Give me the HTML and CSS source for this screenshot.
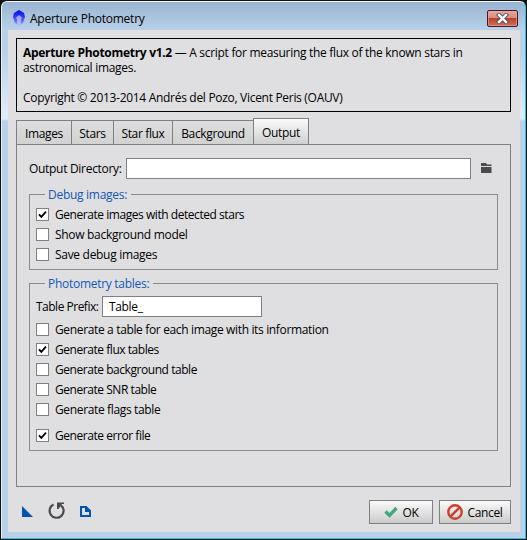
FILE: index.html
```html
<!DOCTYPE html>
<html lang="en">
<head>
<meta charset="utf-8">
<title>Aperture Photometry</title>
<link rel="stylesheet" href="styles.css">
</head>
<body>
<div class="window">
  <header class="titlebar">
    <svg class="logo" width="14" height="16" viewBox="0 0 14 16"><defs><linearGradient id="gem" x1="0" y1="0" x2="0" y2="1"><stop offset="0" stop-color="#0505e8"/><stop offset=".45" stop-color="#3038fa"/><stop offset="1" stop-color="#8f9df8"/></linearGradient></defs><path d="M7 0l5 3 1 4-2 6-4 2-4-2-2-6 1-4z" fill="url(#gem)"/><path d="M7 5L3.500 8l1.500 1v4.500l2 1.500 2-1.500V9l1.500-1z" fill="#c9d2fa" opacity=".7"/></svg>
    <span class="title">Aperture Photometry</span>
    <button class="close" aria-label="Close"><svg width="13" height="11" viewBox="0 0 13 11"><path d="M3 2l7 7M10 2L3 9" fill="none" stroke="#4d5367" stroke-width="4.200" stroke-linecap="square"/><path d="M3 2l7 7M10 2L3 9" fill="none" stroke="#fff" stroke-width="2.400" stroke-linecap="square"/></svg></button>
  </header>
  <main class="client">
    <section class="about">
      <p><b>Aperture Photometry v1.2</b> — A script for measuring the flux of the known stars in</p>
      <p>astronomical images.</p>
      <p class="blank"></p>
      <p>Copyright © 2013-2014 Andrés del Pozo, Vicent Peris (OAUV)</p>
    </section>
    <nav class="tabs">
      <span class="tab tab-images">Images</span><span class="tab tab-stars">Stars</span><span class="tab tab-flux">Star flux</span><span class="tab tab-back">Background</span><span class="tab tab-output active">Output</span>
    </nav>
    <section class="panel">
      <div class="dir-row">
        <label>Output Directory:</label>
        <div class="field dir"></div>
        <svg class="folder" width="11" height="11" viewBox="0 0 11 11"><path d="M0 0h5l1 1.500h4.500V3H0zM0 4h10.500v6H0z" fill="#4a4a4a"/></svg>
      </div>
      <fieldset class="group debug">
        <legend>Debug images:</legend>
        <label class="check snug"><i class="box"><svg viewBox="0 0 11 11"><path d="M2 5.300l2.300 2.500L9 2.700" /></svg></i><span>Generate images with detected stars</span></label>
        <label class="check loose"><i class="box"></i><span>Show background model</span></label>
        <label class="check loose"><i class="box"></i><span>Save debug images</span></label>
      </fieldset>
      <fieldset class="group tables">
        <legend>Photometry tables:</legend>
        <div class="prefix-row"><label>Table Prefix:</label><div class="field prefix">Table_</div></div>
        <label class="check"><i class="box"></i><span>Generate a table for each image with its information</span></label>
        <label class="check snug"><i class="box"><svg viewBox="0 0 11 11"><path d="M2 5.300l2.300 2.500L9 2.700" /></svg></i><span>Generate flux tables</span></label>
        <label class="check snug"><i class="box"></i><span>Generate background table</span></label>
        <label class="check snug"><i class="box"></i><span>Generate SNR table</span></label>
        <label class="check"><i class="box"></i><span>Generate flags table</span></label>
        <label class="check last snug"><i class="box"><svg viewBox="0 0 11 11"><path d="M2 5.300l2.300 2.500L9 2.700" /></svg></i><span>Generate error file</span></label>
      </fieldset>
    </section>
    <footer class="actions">
      <svg class="new" width="11" height="11" viewBox="0 0 11 11"><path d="M0 0l11 11H0z" fill="#0055b0"/></svg>
      <svg class="reset" width="17" height="17" viewBox="0 0 17 17"><path d="M5.500 2.500a7 7 0 1 0 7.500 .8" fill="none" stroke="#4a4a4a" stroke-width="2.200"/><path d="M9 .5h7V2h-2L10.500 7H9z" fill="#4a4a4a"/></svg>
      <svg class="doc" width="11" height="11" viewBox="0 0 11 11"><path d="M1 1h5l4 4v5H1z" fill="none" stroke="#0055b0" stroke-width="2"/><path d="M5 0h1l5 5v1H5z" fill="#0055b0"/></svg>
      <button class="btn ok"><svg width="14" height="12" viewBox="0 0 14 12"><path d="M1.500 5.500L5.500 9.500 12.500 2" fill="none" stroke="#43a67c" stroke-width="3.300"/></svg><span>OK</span></button>
      <button class="btn cancel"><svg width="16" height="16" viewBox="0 0 16 16"><circle cx="8" cy="8" r="6.700" fill="none" stroke="#c9412b" stroke-width="2.400"/><path d="M3.300 12.700l9.400-9.400" stroke="#c9412b" stroke-width="2.400"/></svg><span>Cancel</span></button>
    </footer>
  </main>
</div>
</body>
</html>
```
FILE: styles.css
```css
* { box-sizing: border-box; }
body { margin: 0; padding: 1px 0 0 1px; background: #111; font: 12px/15px "Open Sans", "Noto Sans", sans-serif; letter-spacing: -0.35px; color: #000; }
p { margin: 0; height: 15px; white-space: nowrap; }
svg { display: block; flex: none; }
.window { width: 525px; height: 538px; border: 1px solid #20c4e0; border-left-color: #e8f4fb; border-top-color: #f4f8fc; border-radius: 6px 6px 0 0; padding: 0 5px 5px 6px; background: linear-gradient(#99b4d1, #b9d1ea 28px, #b9d1ea 50px, #dfeaf7 110px, #dfeaf7 117px, #b9d1ea 119px); overflow: hidden; }
.titlebar { height: 28px; display: flex; padding-left: 4px; align-items: flex-start; }
.logo { margin-top: 8px; }
.title { margin: 9px 0 0 4px; white-space: nowrap; letter-spacing: -0.25px; }
.close { margin: 8px 2px 0 auto; width: 31px; height: 17px; border: 1px solid #43192a; border-radius: 2px; padding: 0; display: grid; place-items: center; background: linear-gradient(#e5a79f, #d98a7e 48%, #bb4027 50%, #d4705c); box-shadow: inset 0 0 0 1px #e9a99e99; }
.client { height: 502px; width: 512px; background: #dfdfe1; padding: 8px 8px 0; display: flex; flex-direction: column; }
.about { height: 74px; width: 495px; border: 1px solid #000; padding: 6px; letter-spacing: -0.3px; }
.blank { height: 15px; }
.tabs { display: flex; align-items: flex-end; height: 26px; margin-top: 6px; }
.tab { height: 24px; line-height: 26px; text-align: center; border: 1px solid #808080; border-right: 0; border-bottom: 0; background: linear-gradient(#dedede, #d2d2d2); white-space: nowrap; }
.tab-images { width: 55px; }
.tab-stars { width: 42px; }
.tab-flux { width: 59px; }
.tab-back { width: 81px; }
.tab-output { width: 56px; }
.tab.active { height: 26px; line-height: 28px; border-right: 1px solid #808080; background: linear-gradient(#fafafa, #cfcfcf); }
.panel { width: 495px; height: 343px; border: 1px solid #808080; padding: 13px 12px 0; }
.dir-row { display: flex; height: 21px; align-items: center; }
.dir-row label { width: 97px; white-space: nowrap; letter-spacing: -0.3px; }
.field { height: 21px; border: 1px solid #808080; background: #fff; }
.dir { width: 345px; }
.folder { margin-left: 10px; }
.group { margin: 0; min-width: 0; width: 469px; border: 1px solid #8b8b8d; padding: 0 6px; }
.debug { margin-top: 7px; height: 84px; }
.tables { margin-top: 5px; height: 176px; }
legend { height: 16px; line-height: 18px; margin-left: 9px; padding: 0 4px 0 3px; color: #1458b4; white-space: nowrap; letter-spacing: -0.28px; }
.check { display: flex; height: 20px; align-items: center; }
.check span { white-space: nowrap; }
.check.snug { letter-spacing: -0.45px; }
.check.loose { letter-spacing: -0.3px; }
.check.last { margin-top: 6px; }
.box { width: 13px; height: 13px; border: 1px solid #808080; background: #fff; margin-right: 6px; flex: none; }
.box path { fill: none; stroke: #000; stroke-width: 1.8; }
.debug legend + .check { margin-top: 2px; }
.prefix-row { display: flex; align-items: center; height: 21px; margin: 5px 0 2px; }
.prefix-row label { width: 66px; white-space: nowrap; letter-spacing: -0.5px; }
.prefix { width: 160px; padding-left: 6px; line-height: 20px; }
.actions { display: flex; margin-top: 13px; height: 24px; }
.new { margin: 6px 0 0 6px; }
.reset { margin: 2px 0 0 15px; }
.doc { margin: 6px 0 0 15px; }
.btn { height: 24px; padding: 0; border: 1px solid #808080; background: linear-gradient(#fafafa, #cbcbcb); display: flex; align-items: center; justify-content: center; font: inherit; letter-spacing: inherit; color: #000; }
.ok { width: 64px; margin-left: auto; gap: 5px; }
.cancel { width: 72px; margin: 0 1px 0 6px; gap: 4px; }
```
